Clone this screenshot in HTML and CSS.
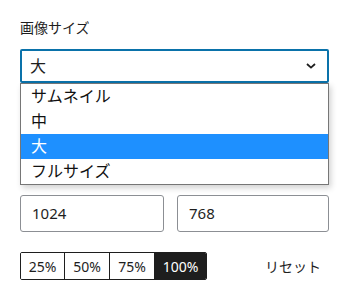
FILE: index.html
```html
<!DOCTYPE html>
<html lang="ja">
<head>
<meta charset="utf-8">
<link rel="stylesheet" href="styles.css">
</head>
<body>
<div class="panel">
  <label class="label">画像サイズ</label>
  <div class="select-wrap">
    <div class="select">
      <span class="select-value">大</span>
      <svg class="chevron" width="10" height="6" viewBox="0 0 10 6"><path d="M1 1l4 3.6L9 1" fill="none" stroke="#1e1e1e" stroke-width="1.8"/></svg>
    </div>
    <ul class="dropdown">
      <li class="option">サムネイル</li>
      <li class="option">中</li>
      <li class="option selected">大</li>
      <li class="option">フルサイズ</li>
    </ul>
  </div>
  <div class="dims">
    <div class="input input-w">1024</div>
    <div class="input input-h">768</div>
  </div>
  <div class="actions">
    <div class="group">
      <button class="pct">25%</button>
      <button class="pct">50%</button>
      <button class="pct">75%</button>
      <button class="pct active">100%</button>
    </div>
    <button class="reset">リセット</button>
  </div>
</div>
</body>
</html>
```
FILE: styles.css
```css
* { box-sizing: border-box; }
html, body { margin: 0; padding: 0; background: #fff; }
body {
  font-family: "Noto Sans", "Noto Sans CJK JP", sans-serif;
  color: #1e1e1e;
  width: 346px;
  height: 295px;
  overflow: hidden;
}
.panel { padding: 18px 17px 0 20px; }
.label {
  display: block;
  font-size: 14px;
  line-height: 20px;
  height: 20px;
  margin-bottom: 11px;
}
.select-wrap { position: relative; width: 309px; }
.select {
  height: 34px;
  border: 2px solid #0a72aa;
  border-radius: 2px;
  display: flex;
  align-items: center;
  justify-content: space-between;
  padding: 0 11px 0 8px;
  font-size: 16px;
}
.select-value { line-height: 20px; }
.chevron { display: block; }
.dropdown {
  position: absolute;
  left: 0;
  top: 34px;
  width: 309px;
  margin: 0;
  padding: 0;
  list-style: none;
  background: #fff;
  border: 1px solid #767676;
  box-shadow: 2px 3px 6px rgba(0,0,0,0.18);
  z-index: 2;
}
.option {
  height: 25px;
  line-height: 25px;
  font-size: 16px;
  padding-left: 10px;
  color: #111;
}
.option.selected { background: #1e90ff; color: #fff; }
.dims {
  display: flex;
  gap: 13px;
  margin-top: 112px;
}
.input {
  height: 37px;
  border: 1px solid #8c8f94;
  border-radius: 3px;
  font-size: 15px;
  line-height: 35px;
  padding-left: 11px;
  color: #1e1e1e;
}
.input-w { width: 144px; }
.input-h { width: 152px; }
.actions {
  display: flex;
  align-items: center;
  margin-top: 20px;
}
.group {
  display: flex;
  border: 1px solid #1e1e1e;
  border-radius: 2px;
  overflow: hidden;
}
.pct {
  font-family: inherit;
  font-size: 14px;
  height: 26px;
  padding: 0;
  margin: 0;
  background: #fff;
  color: #1e1e1e;
  border: 0;
  border-left: 1px solid #1e1e1e;
  width: 45px;
}
.pct:first-child { border-left: 0; width: 43px; }
.pct.active { background: #1e1e1e; color: #fff; width: 52px; }
.reset {
  font-family: inherit;
  font-size: 14px;
  background: none;
  border: 0;
  padding: 0;
  margin-left: 58px;
  color: #1e1e1e;
}
```
